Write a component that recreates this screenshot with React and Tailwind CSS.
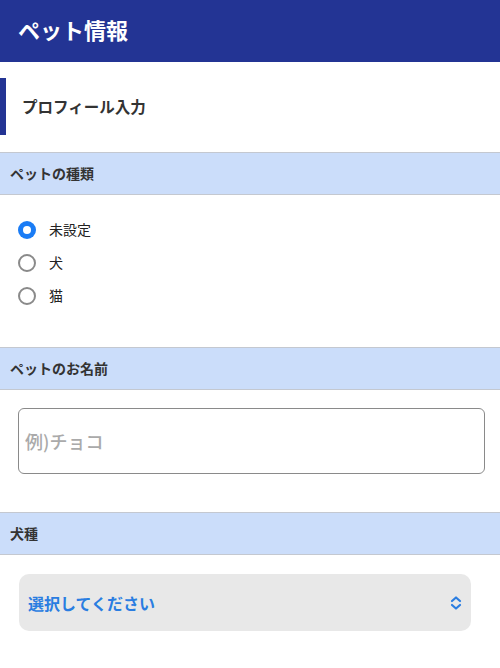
import React from "react";

const font = { fontFamily: '"Noto Sans CJK JP", "Noto Sans", sans-serif' };

function SectionHeader({ children }) {
  return (
    <div className="h-[43px] bg-[#cbddfa] border-y border-[#c4c8d0] flex items-center pl-[10px] pb-[1px] text-[14px] font-bold text-[#333]">
      {children}
    </div>
  );
}

function Radio({ checked, label }) {
  return (
    <div className="flex items-center h-[33px]">
      {checked ? (
        <div className="w-[18px] h-[18px] rounded-full bg-[#1a7cf5] flex items-center justify-center">
          <div className="w-[8px] h-[8px] rounded-full bg-white" />
        </div>
      ) : (
        <div className="w-[18px] h-[18px] rounded-full border-2 border-[#8a8a8a]" />
      )}
      <span className="ml-[13px] text-[14px] text-[#222]">{label}</span>
    </div>
  );
}

export default function App() {
  return (
    <div className="w-[500px] h-[668px] bg-white overflow-hidden" style={font}>
      <div className="h-[62px] bg-[#233494] flex items-center pl-[18px] pb-[4px]">
        <span className="text-white text-[22px] font-bold">ペット情報</span>
      </div>
      <div className="mt-[16px] h-[57px] border-l-[6px] border-[#233494] flex items-center pl-[16px]">
        <span className="text-[15.5px] font-bold text-[#333]">プロフィール入力</span>
      </div>
      <div className="mt-[17px]">
        <SectionHeader>ペットの種類</SectionHeader>
      </div>
      <div className="pl-[18px] pt-[18px] pb-[35px]">
        <Radio checked label="未設定" />
        <Radio label="犬" />
        <Radio label="猫" />
      </div>
      <SectionHeader>ペットのお名前</SectionHeader>
      <div className="px-[18px] pt-[18px] pb-[38px]">
        <div className="h-[66px] w-[467px] rounded-[6px] border border-[#8a8a8a] flex items-center pl-[6px]">
          <span className="text-[18px] font-medium text-[#aaa]">例)チョコ</span>
        </div>
      </div>
      <SectionHeader>犬種</SectionHeader>
      <div className="pl-[19px] pt-[19px]">
        <div className="w-[452px] h-[57px] rounded-[10px] bg-[#e8e8e8] flex items-center justify-between pl-[9px] pr-[8px]">
          <span className="text-[16px] font-bold text-[#2a7de1]">選択してください</span>
          <svg width="14" height="16" viewBox="0 0 14 16" fill="none" stroke="#2a7de1" strokeWidth="2.2" strokeLinecap="round" strokeLinejoin="round">
            <path d="M3 6 L7 2.5 L11 6" />
            <path d="M3 10 L7 13.5 L11 10" />
          </svg>
        </div>
      </div>
    </div>
  );
}
